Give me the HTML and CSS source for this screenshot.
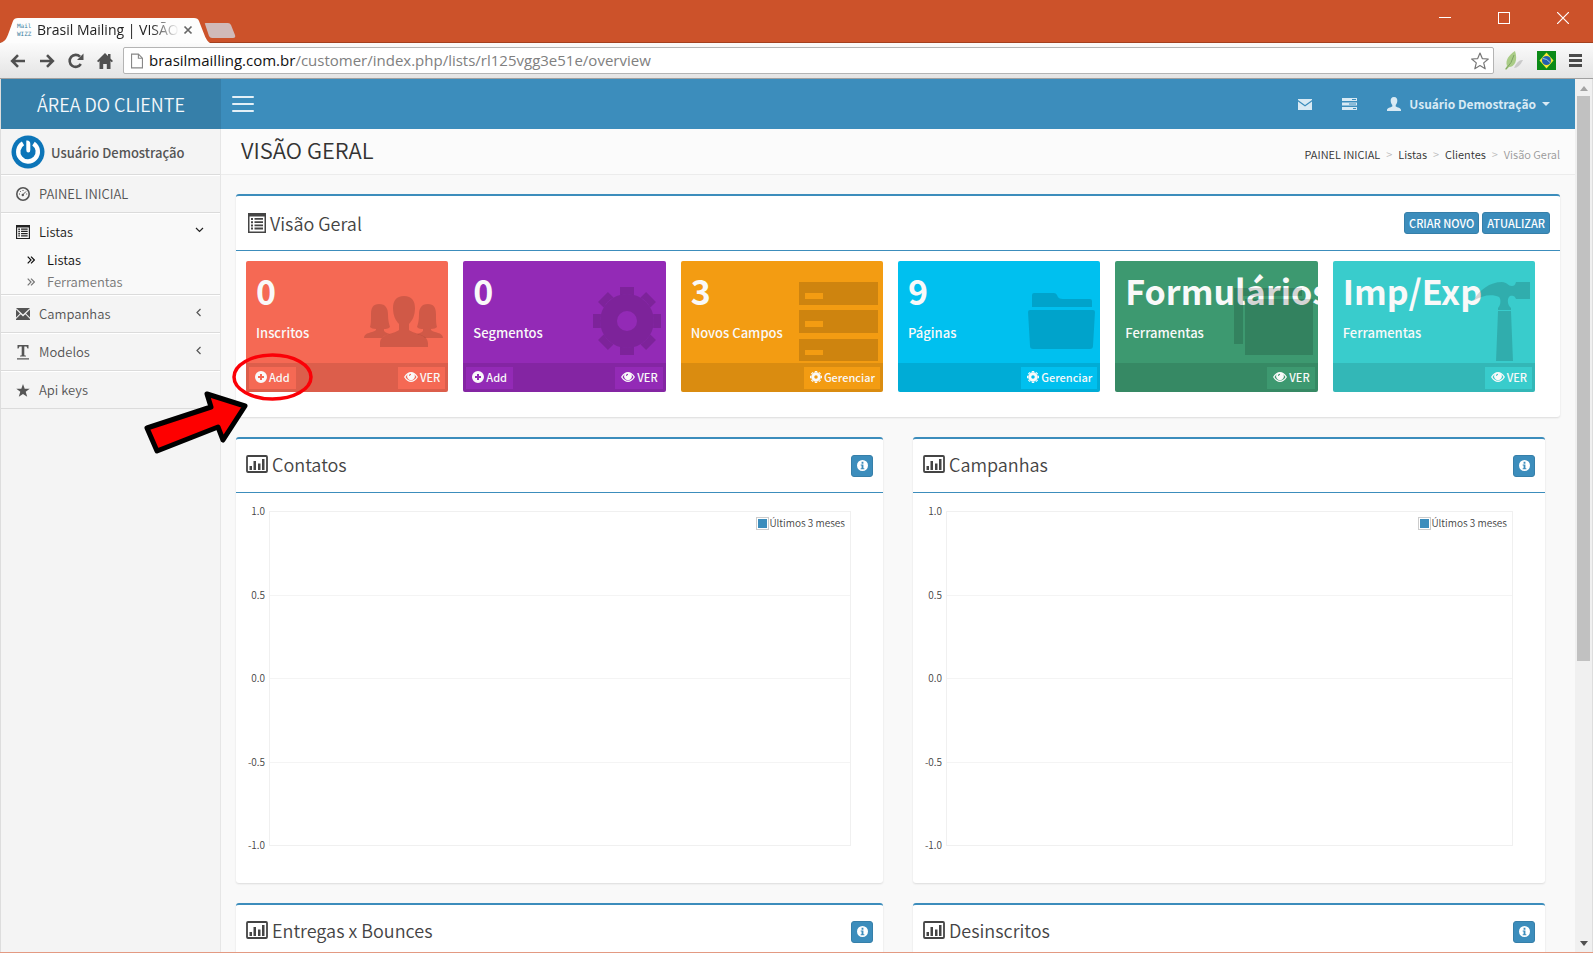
FILE: index.html
```html
<!DOCTYPE html>
<html lang="pt-BR">
<head>
<meta charset="utf-8">
<title>Brasil Mailing | VISÃO GERAL</title>
<link rel="stylesheet" href="styles.css">
</head>
<body>
<svg width="0" height="0" class="defs" aria-hidden="true">
  <symbol id="i-eye" viewBox="0 0 14 12"><path fill="currentColor" fill-rule="evenodd" d="M0 6C2 2.500 4.500 1 7 1s5 1.500 7 5c-2 3.500-4.500 5-7 5S2 9.500 0 6zM1.500 6C3 8.500 5 9.700 7 9.700S11 8.500 12.500 6C11.800 4.800 11 3.900 10.200 3.300A3.800 3.800 0 1 1 3.800 3.300C3 3.900 2.200 4.800 1.500 6zM6.800 2.800A2 2 0 0 0 5 4.800l1 .3c0-.8.4-1.200 1.100-1.400z"/></symbol>
  <symbol id="i-plus" viewBox="0 0 12 12"><path fill="currentColor" fill-rule="evenodd" d="M6 0a6 6 0 1 0 0 12A6 6 0 0 0 6 0zM5 3h2v2h2v2H7v2H5V7H3V5h2z"/></symbol>
  <symbol id="i-info" viewBox="0 0 12 12"><path fill="currentColor" fill-rule="evenodd" d="M6 0a6 6 0 1 0 0 12A6 6 0 0 0 6 0zM5 2h2v2H5zM4 5h3v4h1v1H4V9h1V6H4z"/></symbol>
  <symbol id="i-gear" viewBox="-34 -34 68 68">
    <g fill="currentColor"><path fill-rule="evenodd" d="M0-27A27 27 0 1 0 0 27A27 27 0 1 0 0-27zM0-10A10 10 0 1 1 0 10A10 10 0 1 1 0-10z"/>
    <path d="M-7-34H7V-26.100A27 27 0 0 0-7-26.100zM-7 34H7V26.100A27 27 0 0 1-7 26.100zM-34-7V7H-26.100A27 27 0 0 1-26.100-7zM34-7V7H26.100A27 27 0 0 0 26.100-7z"/>
    <path transform="rotate(45)" d="M-7-34H7V-26.100A27 27 0 0 0-7-26.100zM-7 34H7V26.100A27 27 0 0 1-7 26.100zM-34-7V7H-26.100A27 27 0 0 1-26.100-7zM34-7V7H26.100A27 27 0 0 0 26.100-7z"/></g>
  </symbol>
  <symbol id="i-chart" viewBox="0 0 22 18"><rect x="1" y="1" width="20" height="16" rx="1" fill="none" stroke="currentColor" stroke-width="1.800"/><path fill="currentColor" d="M3.500 11h2.500v4H3.500zM7.500 6H10v9H7.500zM12 8.500h2.500V15H12zM16 4h2.500v11H16z"/></symbol>
  <symbol id="i-list" viewBox="0 0 18 20"><path fill="currentColor" fill-rule="evenodd" d="M0 0h18v20H0zM1.500 3.500v15h15v-15z"/><path fill="currentColor" d="M3 5h2v2H3zM3 8.200h2v2H3zM3 11.400h2v2H3zM3 14.600h2v2H3zM6.500 5H15v1.800H6.500zM6.500 8.200H15V10H6.500zM6.500 11.400H15v1.800H6.500zM6.500 14.600H15v1.800H6.500z"/></symbol>
  <symbol id="i-angles" viewBox="0 0 8 8"><path d="M.7.700 4 4 .7 7.300M4 .700 7.300 4 4 7.300" fill="none" stroke="currentColor" stroke-width="1.200"/></symbol>
</svg>

<div class="browser">
  <header class="titlebar">
    <div class="tab">
      <svg class="tab-shape" width="210" height="25" viewBox="0 0 210 25"><path d="M0 25C7 23 7 19 13 3Q14 0 18 0H194Q198 0 199 3C205 18 206 23 210 25z" fill="#fdfdfd"/></svg>
      <span class="favicon"><span>Mail</span><span>WIZZ</span></span>
      <span class="tab-title">Brasil Mailing | VISÃO GERAL</span>
      <button class="tab-close" aria-label="Fechar guia"><svg width="10" height="10" viewBox="0 0 10 10"><path d="M1.500 1.500l7 7M8.500 1.500l-7 7" stroke="#666" stroke-width="1.700"/></svg></button>
    </div>
    <button class="new-tab" aria-label="Nova guia"><svg width="32" height="15" viewBox="0 0 32 15"><path d="M1 1Q0 0 2 0H24Q26 0 27 2L31 12Q32 15 29 15H8Q6 15 5 13z" fill="#d0bab9"/></svg></button>
    <div class="win-buttons">
      <button aria-label="Minimizar"><svg width="12" height="12"><path d="M0 5.500h12" stroke="#fff"/></svg></button>
      <button aria-label="Maximizar"><svg width="12" height="12"><rect x=".5" y=".5" width="11" height="11" fill="none" stroke="#fff"/></svg></button>
      <button aria-label="Fechar"><svg width="12" height="12"><path d="M0 0l12 12M12 0L0 12" stroke="#fff" stroke-width="1.200"/></svg></button>
    </div>
  </header>

  <div class="toolbar">
    <button aria-label="Voltar"><svg width="16" height="14" viewBox="0 0 16 14"><path d="M15 7H2.500M8 1.200 2.200 7 8 12.800" fill="none" stroke="#505050" stroke-width="2.600"/></svg></button>
    <button aria-label="Avançar"><svg width="16" height="14" viewBox="0 0 16 14"><path d="M1 7h12.500M8 1.200 13.800 7 8 12.800" fill="none" stroke="#505050" stroke-width="2.600"/></svg></button>
    <button aria-label="Recarregar"><svg width="16" height="16" viewBox="0 0 16 16"><path d="M12.800 11A6 6 0 1 1 12 3.700" fill="none" stroke="#505050" stroke-width="2.600"/><path d="M15.500.500V7H9z" fill="#505050"/></svg></button>
    <button aria-label="Página inicial"><svg width="16" height="16" viewBox="0 0 16 16"><path d="M8 0l3 3V1h2.500v4.500L16 8l-1.300 1.300L13.500 8v8H9.800v-5H6.200v5H2.500V8L1.300 9.300 0 8z" fill="#505050"/></svg></button>
    <div class="omnibox">
      <svg width="12" height="16" viewBox="0 0 13 16"><path d="M.6.600h7.400l4.400 4.400v10.400H.6zM8 .600V5h4.400" fill="#fff" stroke="#888" stroke-width="1.200"/></svg>
      <span class="url"><b>brasilmailling.com.br</b>/customer/index.php/lists/rl125vgg3e51e/overview</span>
      <svg width="18" height="18" viewBox="0 0 18 18"><path d="M9 1l2.300 5.600 6 .4-4.600 3.900 1.500 5.900L9 13.600l-5.200 3.200 1.500-5.900L.7 7l6-.4z" fill="#fff" stroke="#777" stroke-width="1.200" stroke-linejoin="round"/></svg>
    </div>
    <button aria-label="Extensão"><svg width="20" height="20" viewBox="0 0 20 20"><path d="M10 17q5 0 9-8-5-1-9 8" fill="#c9c9c9"/><path d="M11 0C5 4 1 9 3 15l-2 3 1 1 3-3C11 16 14 9 11 0z" fill="#a9cc86"/><path d="M2 18Q8 12 10 4" stroke="#7da263" fill="none"/></svg></button>
    <button aria-label="Brasil"><svg width="19" height="19" viewBox="0 0 19 19"><path fill="#0b8a17" d="M0 0h19v19H0z"/><path d="M9.500 1.500l7 8-7 8-7-8z" fill="#f6e936"/><circle cx="9.500" cy="9.500" r="4.500" fill="#2360ae"/><path d="M6 7.500q4 0 7 4" stroke="#9cc7e8" fill="none"/></svg></button>
    <button aria-label="Menu"><svg width="13" height="13" viewBox="0 0 13 13"><path d="M0 1.500h13M0 6.500h13M0 11.500h13" stroke="#4a4a4a" stroke-width="3"/></svg></button>
  </div>

  <div class="viewport">
    <div class="page">
      <nav class="navbar">
        <a class="logo" href="#">ÁREA DO CLIENTE</a>
        <button class="burger" aria-label="Alternar menu"><i></i><i></i><i></i></button>
        <div class="nav-right">
          <a href="#" aria-label="Mensagens"><svg width="14" height="11" viewBox="0 0 14 11"><path fill="currentColor" d="M0 0h14v1L7 6 0 1zM0 2.500l7 5 7-5V11H0z"/></svg></a>
          <a href="#" aria-label="Tarefas"><svg width="15" height="12" viewBox="0 0 15 12"><path fill="currentColor" fill-rule="evenodd" d="M0 0h15v3H0zM10 1v1h4V1zM0 4.500h15v3H0zM7 5.500v1h7v-1zM0 9h15v3H0zM11 10v1h3v-1z"/></svg></a>
          <a href="#" class="account"><svg width="14" height="14" viewBox="0 0 14 14"><path fill="currentColor" d="M7 0c2.500 0 3.500 1.800 3.300 4-.1 1.800-.8 3.200-1.600 4v1.500c1.800 1 5.300 1.300 5.300 3.500v1H0v-1c0-2.200 3.500-2.500 5.300-3.500V8C4.500 7.200 3.800 5.800 3.700 4 3.500 1.800 4.500 0 7 0z"/></svg><span>Usuário Demostração</span><i class="caret"></i></a>
        </div>
      </nav>

      <div class="columns">
        <aside class="sidebar">
          <div class="user">
            <svg width="34" height="34" viewBox="0 0 34 34"><circle cx="17" cy="17" r="16.500" fill="#0c75b8"/><path d="M12 8.300A9.800 9.800 0 1 0 22.500 8.600" fill="none" stroke="#fff" stroke-width="4.400"/><path d="M15.300 5.500Q19.300 5 19.300 9V15Q19.300 17.500 17.300 17.500T15.300 15z" fill="#fff"/></svg>
            <span>Usuário Demostração</span>
          </div>
          <ul class="menu">
            <li><a href="#"><svg width="14" height="14" viewBox="0 0 14 14"><circle cx="7" cy="7" r="6.200" fill="none" stroke="currentColor" stroke-width="1.600"/><path d="M3 7h1M4 4l.8.800M7 3v1M10.200 7h1M6.500 8 10 4.500" stroke="currentColor" fill="none"/><circle cx="6.800" cy="8" r="1.200" fill="currentColor"/></svg>PAINEL INICIAL</a></li>
            <li class="open"><a href="#"><svg width="14" height="14" viewBox="0 0 18 20" preserveAspectRatio="none"><use href="#i-list" width="18" height="20"/></svg>Listas<svg class="arrow" width="9" height="6" viewBox="0 0 9 6"><path d="M1 1l3.500 3.500L8 1" fill="none" stroke="currentColor" stroke-width="1.200"/></svg></a>
              <ul class="submenu">
                <li class="current"><a href="#"><svg width="8" height="8"><use href="#i-angles"/></svg>Listas</a></li>
                <li><a href="#"><svg width="8" height="8"><use href="#i-angles"/></svg>Ferramentas</a></li>
              </ul></li>
            <li><a href="#"><svg width="14" height="12" viewBox="0 0 14 12"><path fill="currentColor" d="M0 0h14L7 6.500zM0 1.500 4 5.500 0 9.500zM14 1.500v8l-4-4zM0 12v-1l4.700-4.700L7 8.500l2.300-2.200L14 11v1z"/></svg>Campanhas<svg class="arrow" width="6" height="9" viewBox="0 0 6 9"><path d="M4.500 1 1 4.500 4.500 8" fill="none" stroke="currentColor" stroke-width="1.200"/></svg></a></li>
            <li><a href="#"><svg width="14" height="15" viewBox="0 0 14 15"><path fill="currentColor" d="M1.500 0h11v3.500h-1L10.500 1.500H8.300v8.700l1.700.5v.8H4v-.8l1.700-.5V1.500H3.500L2.500 3.500h-1zM1 13.200h12v1.300H1z"/></svg>Modelos<svg class="arrow" width="6" height="9" viewBox="0 0 6 9"><path d="M4.500 1 1 4.500 4.500 8" fill="none" stroke="currentColor" stroke-width="1.200"/></svg></a></li>
            <li><a href="#"><svg width="14" height="13" viewBox="0 0 14 13"><path fill="currentColor" d="M7 0l1.700 4.700 5 .1-4 3 1.500 5L7 9.900l-4.200 2.900 1.500-5-4-3 5-.1z"/></svg>Api keys</a></li>
          </ul>
        </aside>

        <main class="content">
          <div class="content-header">
            <h1>VISÃO GERAL</h1>
            <nav class="crumbs"><a href="#">PAINEL INICIAL</a><i>&gt;</i><a href="#">Listas</a><i>&gt;</i><a href="#">Clientes</a><i>&gt;</i><span>Visão Geral</span></nav>
          </div>

          <section class="box overview">
            <div class="box-head"><h2><svg width="18" height="20"><use href="#i-list"/></svg>Visão Geral</h2>
              <div class="actions"><button class="btn">CRIAR NOVO</button><button class="btn">ATUALIZAR</button></div></div>
            <div class="cards">
              <article class="card red"><div class="inner"><h3>0</h3><p>Inscritos</p></div>
                <svg class="card-icon" width="80" height="84" viewBox="0 0 80 84"><path d="M41 16c8 0 11 5 11 12 0 8-3 13-6 16v6c5 4 19 4 19 13v4H17v-4c0-9 14-9 19-13v-6c-3-3-6-8-6-16 0-7 3-12 11-12z"/><path d="M16 24c7 0 9 5 9 10 0 6 1 10 2 13-2 2-4 2-6 2v2c2 2 4 2 6 3-4 1-7 2-8 4H1c0-6 9-5 12-8v-1c-3 0-5-1-6-2 1-3 1-7 1-13 0-6 2-10 8-10z"/><path d="M65 24c-7 0-9 5-9 10 0 6-1 10-2 13 2 2 4 2 6 2v2c-2 2-4 2-6 3 4 1 7 2 8 4h18c0-6-9-5-12-8v-1c3 0 5-1 6-2-1-3-1-7-1-13 0-6-2-10-8-10z"/></svg>
                <footer><button><svg width="12" height="12"><use href="#i-plus"/></svg>Add</button><button class="end"><svg width="14" height="12"><use href="#i-eye"/></svg>VER</button></footer></article>
              <article class="card purple"><div class="inner"><h3>0</h3><p>Segmentos</p></div>
                <svg class="card-icon" width="80" height="84" viewBox="0 0 80 84"><use href="#i-gear" x="12" y="7" width="68" height="68"/></svg>
                <footer><button><svg width="12" height="12"><use href="#i-plus"/></svg>Add</button><button class="end"><svg width="14" height="12"><use href="#i-eye"/></svg>VER</button></footer></article>
              <article class="card orange"><div class="inner"><h3>3</h3><p>Novos Campos</p></div>
                <svg class="card-icon" width="80" height="84" viewBox="0 0 80 84"><path fill-rule="evenodd" d="M1 2h79v23H1zM7 13v6h18v-6zM1 30h79v23H1zM7 41v6h18v-6zM1 59h79v22H1zM7 70v5h18v-5z"/></svg>
                <footer><button class="end"><svg width="12" height="12"><use href="#i-gear"/></svg>Gerenciar</button></footer></article>
              <article class="card aqua"><div class="inner"><h3>9</h3><p>Páginas</p></div>
                <svg class="card-icon" width="80" height="84" viewBox="0 0 80 84"><path d="M17 27V15q0-2 2-2h20q2 0 3 2c1 3 3 4 6 4h27q2 0 2 2v6zM13 32q0-2 2-2h63q2 0 2 2l-2 34q0 3-3 3H18q-3 0-3-3z"/></svg>
                <footer><button class="end"><svg width="12" height="12"><use href="#i-gear"/></svg>Gerenciar</button></footer></article>
              <article class="card green"><div class="inner"><h3>Formulários</h3><p>Ferramentas</p></div>
                <svg class="card-icon" width="80" height="84" viewBox="0 0 80 84"><path d="M1 8h68v8H10v48H1zM12 19h68v56H12z"/></svg>
                <footer><button class="end"><svg width="14" height="12"><use href="#i-eye"/></svg>VER</button></footer></article>
              <article class="card teal"><div class="inner"><h3>Imp/Exp</h3><p>Ferramentas</p></div>
                <svg class="card-icon" width="80" height="84" viewBox="0 0 80 84"><path d="M23 21C29 10 40 2 52 2c5 0 6 4 10 4 2 0 3-1 4-4h14v17H66c-1-3-3-4-6-3-3 2-3 9 1 12v2H48v-2c3-3 3-9 1-11-7-3-16-2-26 4zM48 31h13l2 50H46z"/></svg>
                <footer><button class="end"><svg width="14" height="12"><use href="#i-eye"/></svg>VER</button></footer></article>
            </div>
          </section>

          <div class="charts">
            <section class="box"><div class="box-head"><h2><svg width="22" height="18"><use href="#i-chart"/></svg>Contatos</h2><button class="btn info" aria-label="Informações"><svg width="11" height="11"><use href="#i-info"/></svg></button></div>
              <div class="chart"><div class="axis"><span>1.0</span><span>0.5</span><span>0.0</span><span>-0.5</span><span>-1.0</span></div>
                <div class="plot"><i></i><i></i><i></i><i></i><div class="legend"><b></b>Últimos 3 meses</div></div></div></section>
            <section class="box"><div class="box-head"><h2><svg width="22" height="18"><use href="#i-chart"/></svg>Campanhas</h2><button class="btn info" aria-label="Informações"><svg width="11" height="11"><use href="#i-info"/></svg></button></div>
              <div class="chart"><div class="axis"><span>1.0</span><span>0.5</span><span>0.0</span><span>-0.5</span><span>-1.0</span></div>
                <div class="plot"><i></i><i></i><i></i><i></i><div class="legend"><b></b>Últimos 3 meses</div></div></div></section>
            <section class="box"><div class="box-head"><h2><svg width="22" height="18"><use href="#i-chart"/></svg>Entregas x Bounces</h2><button class="btn info" aria-label="Informações"><svg width="11" height="11"><use href="#i-info"/></svg></button></div></section>
            <section class="box"><div class="box-head"><h2><svg width="22" height="18"><use href="#i-chart"/></svg>Desinscritos</h2><button class="btn info" aria-label="Informações"><svg width="11" height="11"><use href="#i-info"/></svg></button></div></section>
          </div>
        </main>
      </div>
    </div>
    <div class="scrollbar"><svg width="8" height="5"><path d="M0 5l4-5 4 5z" fill="#a3a3a3"/></svg><i class="thumb"></i><svg width="8" height="5"><path d="M0 0h8L4 5z" fill="#505050"/></svg></div>
  </div>

  <svg class="annotation" width="180" height="110" viewBox="140 350 180 110" aria-hidden="true">
    <ellipse cx="272.500" cy="377" rx="38.500" ry="22" fill="none" stroke="#fb0007" stroke-width="3.500"/>
    <path d="M147 428 211 407 207 394 245 406 223 440 218 427 157 451z" fill="#fe0000" stroke="#000" stroke-width="5" stroke-linejoin="round"/>
  </svg>
</div>
</body>
</html>
```

FILE: styles.css
```css
* { box-sizing: border-box; }
body { margin: 0; font-family: "Noto Sans CJK SC", "Open Sans", sans-serif; font-size: 13px; font-weight: 350; line-height: 20px; color: #333; }
button { border: 0; padding: 0; background: none; font: inherit; color: inherit; display: flex; align-items: center; cursor: pointer; }
a { color: inherit; text-decoration: none; }
svg { display: block; flex: none; }
h1, h2, h3, p, ul { margin: 0; padding: 0; font-weight: 350; }
ul { list-style: none; }
i { font-style: normal; }
.defs { position: absolute; }

.browser { position: relative; height: 100vh; display: flex; flex-direction: column; overflow: hidden; border-bottom: 1px solid #e39a82; }

/* Window chrome */
.titlebar { height: 43px; flex: none; display: flex; align-items: flex-end; background: #cc522a; border-bottom: 1px solid #a3401f; font-family: "Open Sans", sans-serif; font-weight: 400; }
.tab { position: relative; width: 210px; height: 24px; display: flex; align-items: center; padding: 0 17px; gap: 4px; }
.tab-shape { position: absolute; left: 0; bottom: -1px; }
.favicon, .tab-title, .tab-close { position: relative; }
.favicon { display: flex; flex-direction: column; width: 16px; font: 400 6px/8px "DejaVu Sans Mono", monospace; color: #3a7ea0; }
.tab-title { flex: 1; font-size: 14px; color: #222; white-space: nowrap; overflow: hidden; mask-image: linear-gradient(90deg, #000 80%, transparent); }
.new-tab { margin: 0 0 4px -6px; }
.win-buttons { margin-left: auto; align-self: flex-start; display: flex; gap: 47px; padding: 12px 24px 0 0; }
.toolbar { height: 36px; flex: none; display: flex; align-items: center; gap: 13px; padding: 0 11px 0 10px; background: linear-gradient(#fbfbfb, #e4e4e4); border-bottom: 1px solid #a0a0a0; }
.omnibox { flex: 1; height: 27px; display: flex; align-items: center; gap: 6px; padding: 0 4px 0 7px; margin: 0 -3px; background: #fff; border: 1px solid #b4b4b4; border-radius: 2px; font: 15px/20px "Open Sans", sans-serif; color: #808080; }
.url { flex: 1; padding-bottom: 2px; }
.url b { font-weight: 400; color: #111; }

.viewport { flex: 1; min-height: 0; display: flex; border-left: 1px solid #ddd; border-right: 1px solid #ddd; }
.page { flex: 1; min-width: 0; display: flex; flex-direction: column; overflow: hidden; }
.scrollbar { width: 17px; display: flex; flex-direction: column; align-items: center; padding: 7px 2px 6px; gap: 5px; background: #f0f0f0; }
.thumb { width: 13px; height: 565px; background: #c1c1c1; margin-bottom: auto; }

/* Top bar */
.navbar { height: 50px; flex: none; display: flex; align-items: center; background: #3c8dbc; color: #d9eaf4; }
.logo { width: 220px; line-height: 50px; text-align: center; background: #367fa9; color: #f4f8fb; font-size: 18px; }
.burger { flex-direction: column; gap: 5px; margin-left: 11px; }
.burger i { width: 22px; height: 2px; background: #e4f0f7; border-radius: 1px; }
.nav-right { margin-left: auto; display: flex; align-items: center; gap: 30px; padding-right: 25px; }
.account { display: flex; align-items: center; gap: 8px; font-weight: 700; font-size: 12px; }
.caret { border: 4px solid transparent; border-top-color: currentColor; border-bottom: 0; margin-left: -2px; }

/* Sidebar */
.columns { flex: 1; min-height: 0; display: flex; }
.sidebar { width: 220px; flex: none; background: #f4f4f4; border-right: 1px solid #e6e6e6; color: #555; }
.user { height: 46px; display: flex; align-items: center; gap: 6px; padding: 0 10px; border-bottom: 1px solid #dbdbdb; font-weight: 500; }
.user span { padding-top: 2px; }
.menu > li { border-bottom: 1px solid #dbdbdb; border-top: 1px solid #fff; }
.menu > li > a { display: flex; align-items: center; gap: 9px; height: 36px; padding: 0 18px 0 15px; }
.menu .open { background: #f9f9f9; color: #222; }
.arrow { margin: 0 0 4px auto; }
.menu .open .arrow { margin-right: -2px; }
.submenu a { display: flex; align-items: center; gap: 12px; height: 22px; padding: 0 0 2px 26px; color: #777; }
.submenu .current a { color: #111; }

/* Content */
.content { flex: 1; min-width: 0; background: #f9f9f9; }
.content-header { height: 46px; display: flex; align-items: center; justify-content: space-between; padding: 0 15px 0 20px; background: #fbfbfb; border-bottom: 1px solid #ececec; }
h1 { font-size: 22px; padding-bottom: 5px; }
.crumbs { display: flex; gap: 6px; font-size: 11px; padding-top: 4px; }
.crumbs i { color: #bbb; }
.crumbs span { color: #999; }
.box { background: #fff; border-top: 2px solid #3c8dbc; border-radius: 3px; box-shadow: 0 1px 2px rgba(0, 0, 0, .12); }
.box-head { height: 54px; display: flex; align-items: center; justify-content: space-between; padding: 0 10px; border-bottom: 1px solid #3c8dbc; color: #444; }
h2 { display: flex; align-items: center; gap: 4px; font-size: 18px; }
.charts h2 { padding-bottom: 3px; }
.actions { display: flex; gap: 3px; }
.btn { height: 22px; padding: 0 4px; border: 1px solid #367fa9; border-radius: 3px; background: #3c8dbc; color: #fff; font-size: 11px; font-weight: 500; }
.info { width: 22px; padding: 0; justify-content: center; }
.overview { margin: 19px 15px 20px; padding-bottom: 25px; }
.overview .box-head { height: 55px; }
.overview h2 { padding-left: 2px; }
.cards { display: grid; grid-template-columns: repeat(6, minmax(0, 1fr)); gap: 15px; padding: 10px 25px 0 10px; }
.card { position: relative; overflow: hidden; border-radius: 2px; color: #f9f9f9; }
.inner { padding: 8px 10px 0; height: 102px; }
h3 { font-size: 34px; line-height: 44px; font-weight: 700; white-space: nowrap; }
.card p { padding-top: 10px; line-height: 20px; font-weight: 500; }
.card-icon { position: absolute; right: 5px; top: 19px; fill: rgba(0, 0, 0, .15); color: rgba(0, 0, 0, .15); }
.card footer { height: 29px; display: flex; align-items: center; padding: 0 3px; background: rgba(0, 0, 0, .1); }
.card footer button { height: 22px; padding: 0 6px 2px; gap: 2px; font-size: 11px; font-weight: 500; }
.card footer .end { margin-left: auto; padding-right: 5px; }
.card, .card footer button { background: var(--tone); }
.red { --tone: #f56954; }
.purple { --tone: #932ab6; }
.orange { --tone: #f39c12; }
.aqua { --tone: #00c0ef; }
.green { --tone: #3d9970; }
.teal { --tone: #39cccc; }

.charts { display: grid; grid-template-columns: 647fr 632fr; gap: 20px 30px; padding: 0 30px 0 15px; }
.chart { display: flex; gap: 4px; padding: 18px 32px 37px 10px; font-size: 10px; color: #444; }
.axis { width: 19px; height: 350px; margin: -8px 0; display: flex; flex-direction: column; justify-content: space-between; text-align: right; line-height: 16px; white-space: nowrap; }
.plot { position: relative; flex: 1; height: 335px; display: flex; flex-direction: column; border: 1px solid #f0f0f0; }
.plot > i { flex: 1; border-bottom: 1px solid #f4f4f4; }
.plot > i:nth-of-type(4) { border-bottom: 0; }
.legend { position: absolute; right: 5px; top: 3px; display: flex; align-items: center; line-height: 16px; }
.legend b { width: 13px; height: 13px; border: 1px solid #ccc; padding: 1px; background: #3c8dbc content-box; }

.annotation { position: absolute; left: 140px; top: 350px; pointer-events: none; }
```
